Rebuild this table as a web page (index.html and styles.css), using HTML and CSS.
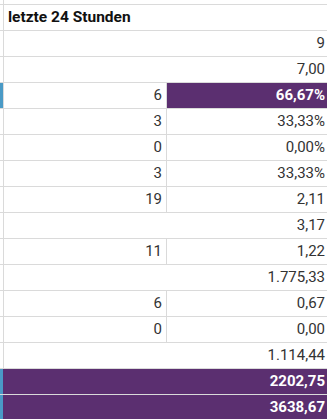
FILE: index.html
```html
<!DOCTYPE html>
<html lang="de">
<head>
<meta charset="utf-8">
<title>letzte 24 Stunden</title>
<link rel="stylesheet" href="styles.css">
</head>
<body>
<div class="sheet">
  <div class="row spacer"><div class="mark"></div><div class="cells"></div></div>
  <div class="row"><div class="mark"></div><div class="cells"><div class="cell head">letzte 24 Stunden</div></div></div>
  <div class="row"><div class="mark"></div><div class="cells"><div class="cell full">9</div></div></div>
  <div class="row"><div class="mark"></div><div class="cells"><div class="cell full">7,00</div></div></div>
  <div class="row"><div class="mark blue"></div><div class="cells"><div class="cell left">6</div><div class="cell right hl">66,67%</div></div></div>
  <div class="row"><div class="mark"></div><div class="cells"><div class="cell left">3</div><div class="cell right">33,33%</div></div></div>
  <div class="row"><div class="mark"></div><div class="cells"><div class="cell left">0</div><div class="cell right">0,00%</div></div></div>
  <div class="row"><div class="mark"></div><div class="cells"><div class="cell left">3</div><div class="cell right">33,33%</div></div></div>
  <div class="row"><div class="mark"></div><div class="cells"><div class="cell left">19</div><div class="cell right">2,11</div></div></div>
  <div class="row"><div class="mark"></div><div class="cells"><div class="cell full">3,17</div></div></div>
  <div class="row"><div class="mark"></div><div class="cells"><div class="cell left">11</div><div class="cell right">1,22</div></div></div>
  <div class="row"><div class="mark"></div><div class="cells"><div class="cell full">1.775,33</div></div></div>
  <div class="row"><div class="mark"></div><div class="cells"><div class="cell left">6</div><div class="cell right">0,67</div></div></div>
  <div class="row"><div class="mark"></div><div class="cells"><div class="cell left">0</div><div class="cell right">0,00</div></div></div>
  <div class="row"><div class="mark"></div><div class="cells"><div class="cell full">1.114,44</div></div></div>
  <div class="row total"><div class="mark blue"></div><div class="cells"><div class="cell full">2202,75</div></div></div>
  <div class="row total"><div class="mark blue"></div><div class="cells"><div class="cell full">3638,67</div></div></div>
</div>
</body>
</html>
```
FILE: styles.css
```css
html, body {
  margin: 0;
  padding: 0;
  background: #ffffff;
  overflow: hidden;
}

.sheet {
  width: 327px;
  font-family: Roboto, "Liberation Sans", sans-serif;
  font-size: 15px;
  color: #333333;
}

.row {
  display: flex;
  height: 26px;
  box-sizing: border-box;
  border-bottom: 1px solid #dadada;
}

.row.spacer {
  height: 5px;
}

.mark {
  width: 3px;
  flex: none;
}

.mark.blue {
  background: #4a9ac6;
}

.cells {
  flex: 1;
  display: flex;
  border-left: 1px solid #dadada;
  min-width: 0;
}

.cell {
  line-height: 25px;
  white-space: nowrap;
  box-sizing: border-box;
}

.cell.head {
  flex: 1;
  padding-left: 4px;
  font-size: 15.5px;
  font-weight: 700;
  color: #111111;
}

.cell.full {
  flex: 1;
  text-align: right;
  padding-right: 2px;
}

.cell.left {
  width: 163px;
  flex: none;
  text-align: right;
  padding-right: 4px;
  border-right: 1px solid #dadada;
}

.cell.right {
  flex: 1;
  text-align: right;
  padding-right: 2px;
}

.cell.hl {
  background: #5b2f70;
  color: #ffffff;
  font-weight: 700;
}

.row.total .cells {
  background: #5b2f70;
  border-left-color: #5b2f70;
}

.row.total .cell {
  color: #ffffff;
  font-weight: 700;
}
```
